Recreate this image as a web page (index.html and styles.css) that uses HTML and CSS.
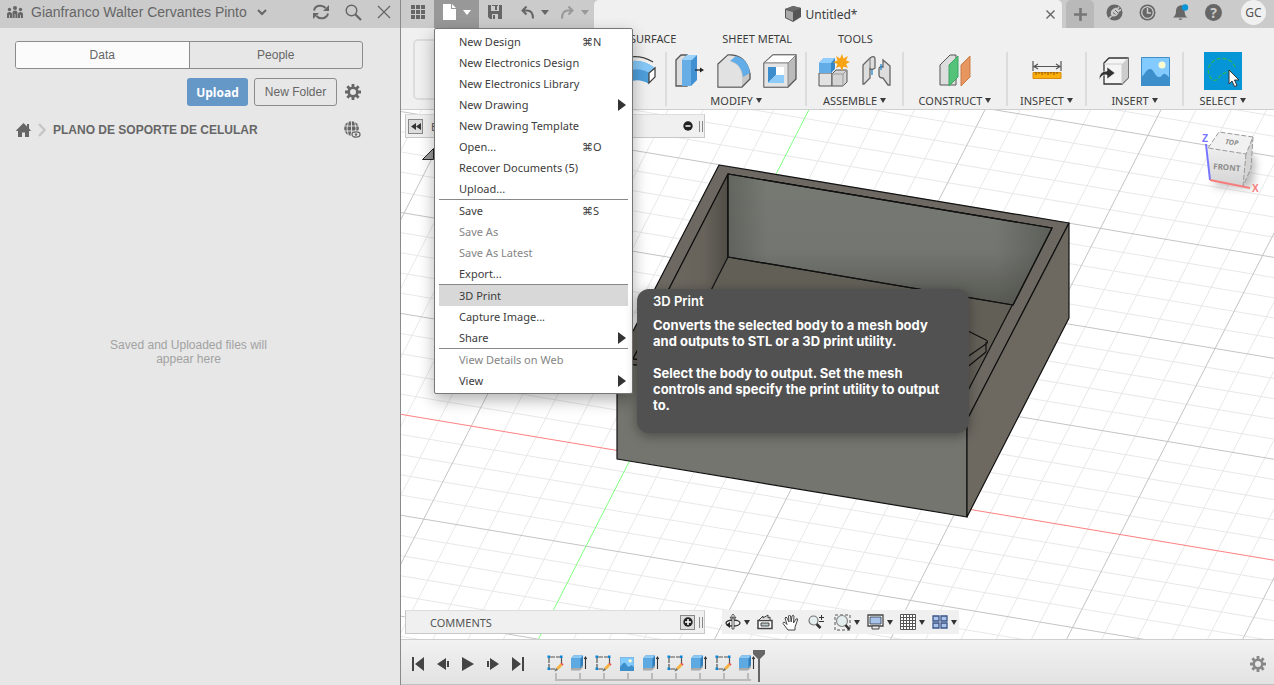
FILE: index.html
```html
<!DOCTYPE html>
<html lang="en">
<head>
    <meta charset="UTF-8">
    <meta name="viewport" content="width=device-width, initial-scale=1.0">
    <title>Untitled*</title>
    <link rel="stylesheet" href="styles.css">
</head>
<body>

    <!-- Shared icons -->
    <svg class="defs" width="0" height="0">
        <symbol id="i-gear" viewBox="0 0 16 16">
            <g fill="currentColor">
                <path fill-rule="evenodd" d="M8 2.400a5.600 5.600 0 1 0 0 11.200A5.600 5.600 0 0 0 8 2.400zM8 5a3 3 0 1 1 0 6 3 3 0 0 1 0-6z"/>
                <path d="M6.600 0h2.800v3H6.600zM6.600 13h2.800v3H6.600zM0 6.600h3v2.800H0zM13 6.600h3v2.800h-3z"/>
                <path transform="rotate(45 8 8)" d="M6.600 0h2.800v3H6.600zM6.600 13h2.800v3H6.600zM0 6.600h3v2.800H0zM13 6.600h3v2.800h-3z"/>
            </g>
        </symbol>
        <symbol id="i-sketch" viewBox="0 0 17 17">
            <path d="M3 2h10M2 3v10M14.500 3v6M3 14h5" fill="none" stroke="#555" stroke-width="1.200" stroke-dasharray="5 1"/>
            <path d="M0.500 0.500h2.500v2.500H0.500zM13 0.500h2.500v2.500H13zM0.500 12.500h2.500v2.500H0.500z" fill="#0e85d8"/>
            <path d="M9 13l4.500-4.500 2 2L11 15z" fill="#f5b13d"/>
            <path d="M13.500 8.500l1-1 2 2-1 1z" fill="#e8414b"/>
            <path d="M9 13l-1.500 3.500L11 15z" fill="#666"/>
        </symbol>
        <symbol id="i-extrude" viewBox="0 0 17 17">
            <path d="M0 13v2.500h9l3-3V9z" fill="#aaa"/>
            <path d="M0 3.500l2.500-3H12v9.500l-2.500 3H0z" fill="#2e7dbb"/>
            <path d="M0 3.500l2.500-3H12l-2.500 3z" fill="#8cc9f5"/>
            <path d="M0 3.500h9.500V13H0z" fill="#5ea9e2"/>
            <path d="M14.500 2v12M13.300 4l1.200-2 1.200 2" fill="none" stroke="#333" stroke-width="1.100"/>
        </symbol>
        <symbol id="i-image" viewBox="0 0 29 29">
            <path d="M0.500 0.500h28v28H0.500z" fill="#83caff" stroke="#3f8fcb"/>
            <path d="M0 20c4-2 5-8 9-8s5 8 9 8 3-4 6-3 3 3 5 4v8H0z" fill="#3c8fcb"/>
            <circle cx="21" cy="8" r="3.500" fill="#fdfbd0"/>
        </symbol>
    </svg>

    <div class="app">

        <!-- Data panel -->
        <aside class="data-panel">
            <header class="data-header">
                <svg class="team" width="16" height="13" viewBox="0 0 16 13"><g fill="#666"><circle cx="2.500" cy="3.500" r="1.700"/><circle cx="8" cy="2" r="2"/><circle cx="13.500" cy="3.500" r="1.700"/><path d="M0 12V8q0-2 2.500-2T5 8v4zM5.500 12V7q0-2.500 2.500-2.500T10.500 7v5zM11 12V8q0-2 2.500-2T16 8v4z"/></g><path d="M2.500 9v3M8 8v4M13.500 9v3" stroke="#cbcbcb" stroke-width=".8"/></svg>
                <span class="team-name">Gianfranco Walter Cervantes Pinto</span>
                <svg class="team-arrow" width="10" height="7" viewBox="0 0 10 7"><path d="M1 1l4 4 4-4" fill="none" stroke="#666" stroke-width="2"/></svg>
                <button class="icon-btn" aria-label="Refresh"><svg width="18" height="16" viewBox="0 0 18 16"><path d="M2 6.500a6.500 6 0 0 1 11.500-2.500M16 9.500A6.500 6 0 0 1 4.500 12" fill="none" stroke="#666" stroke-width="2"/><path d="M17 1v6h-6zM1 15V9h6z" fill="#666"/></svg></button>
                <button class="icon-btn" aria-label="Search"><svg width="17" height="17" viewBox="0 0 17 17"><circle cx="6.500" cy="6.500" r="5.300" fill="none" stroke="#666" stroke-width="1.400"/><path d="M10.500 10.500l5.500 5.500" stroke="#666" stroke-width="2.200"/></svg></button>
                <button class="icon-btn" aria-label="Close panel"><svg width="14" height="14" viewBox="0 0 14 14"><path d="M1 1l12 12M13 1L1 13" stroke="#666" stroke-width="1.200"/></svg></button>
            </header>
            <div class="data-tabs">
                <button class="active">Data</button>
                <button>People</button>
            </div>
            <div class="data-actions">
                <button class="upload">Upload</button>
                <button class="new-folder">New Folder</button>
                <button class="icon-btn" aria-label="Settings"><svg width="16" height="16"><use href="#i-gear"/></svg></button>
            </div>
            <div class="breadcrumb">
                <svg width="15" height="14" viewBox="0 0 15 14"><path d="M0 7.500L7.500 0 11 3.500V1h2v4.500l2 2-1 .5h-1v6H9V9.500H6V14H2V8H0.500z" fill="#666"/></svg>
                <svg width="8" height="14" viewBox="0 0 8 14"><path d="M1 1l5.500 6L1 13" fill="none" stroke="#c6c6c6" stroke-width="2.500"/></svg>
                <strong>PLANO DE SOPORTE DE CELULAR</strong>
                <button class="icon-btn globe" aria-label="Open on the web"><svg width="17" height="17" viewBox="0 0 17 17"><circle cx="7.500" cy="7.500" r="7.300" fill="#666"/><path d="M7.500 0v15M0 5h15M0 10h15M4.500 0q-3 7.500 0 15M10.500 0q3 7.500 0 15" fill="none" stroke="#e7e7e7" stroke-width=".9"/><ellipse cx="12" cy="13.500" rx="5.500" ry="3.800" fill="#e7e7e7"/><ellipse cx="12" cy="13.500" rx="4" ry="2.600" fill="none" stroke="#666" stroke-width="1.300"/><circle cx="12" cy="13.500" r="1.200" fill="#666"/></svg></button>
            </div>
            <p class="empty">Saved and Uploaded files will<br>appear here</p>
        </aside>

        <main class="workspace">

            <!-- Top bar -->
            <header class="topbar">
                <button class="tool-btn grid-btn" aria-label="Show data panel"><svg width="14" height="14" viewBox="0 0 14 14"><path d="M0 0h4v4H0zM5 0h4v4H5zM10 0h4v4h-4zM0 5h4v4H0zM5 5h4v4H5zM10 5h4v4h-4zM0 10h4v4H0zM5 10h4v4H5zM10 10h4v4h-4z" fill="#666"/></svg></button>
                <div class="file">
                    <button class="tool-btn file-btn" aria-label="File">
                        <svg width="13" height="16" viewBox="0 0 13 16"><path d="M0 0h8v5h5v11H0zM9 0l4 4H9z" fill="#fff"/></svg>
                        <i class="caret"></i>
                    </button>
                    <ul class="menu">
                        <li><button>New Design<kbd>⌘N</kbd></button></li>
                        <li><button>New Electronics Design</button></li>
                        <li><button>New Electronics Library</button></li>
                        <li><button class="sub">New Drawing</button></li>
                        <li><button>New Drawing Template</button></li>
                        <li><button>Open...<kbd>⌘O</kbd></button></li>
                        <li><button>Recover Documents (5)</button></li>
                        <li><button>Upload...</button></li>
                        <li class="sep"><button>Save<kbd>⌘S</kbd></button></li>
                        <li><button disabled>Save As</button></li>
                        <li><button disabled>Save As Latest</button></li>
                        <li><button>Export...</button></li>
                        <li class="sep selected">
                            <button>3D Print</button>
                            <div class="tooltip" role="tooltip">
                                <h2>3D Print</h2>
                                <p>Converts the selected body to a mesh body and outputs to STL or a 3D print utility.</p>
                                <p>Select the body to output. Set the mesh controls and specify the print utility to output to.</p>
                            </div>
                        </li>
                        <li><button>Capture Image...</button></li>
                        <li><button class="sub">Share</button></li>
                        <li class="sep"><button disabled>View Details on Web</button></li>
                        <li><button class="sub">View</button></li>
                    </ul>
                </div>
                <div class="quick">
                    <button class="tool-btn" aria-label="Save"><svg width="14" height="14" viewBox="0 0 14 14"><path d="M0 0h14v14H2l-2-2z" fill="#666"/><path d="M3 0h8v6H3zM4 9h6v5H4z" fill="#cbcbcb"/><path d="M7 1h2v4H7zM5 10h2v4H5zM4 0h6v1H4z" fill="#666"/></svg></button>
                    <button class="tool-btn undo" aria-label="Undo"><svg width="13" height="13" viewBox="0 0 13 13"><path d="M1.500 4.500H6q6 0 6 8M5.500 0.500l-4 4 4 4" fill="none" stroke="#666" stroke-width="2"/></svg><i class="caret"></i></button>
                    <button class="tool-btn redo" aria-label="Redo" disabled><svg width="13" height="13" viewBox="0 0 13 13"><path d="M11.500 4.500H7q-6 0-6 8M7.500 0.500l4 4-4 4" fill="none" stroke="#999" stroke-width="2"/></svg><i class="caret"></i></button>
                </div>
                <div class="doc-tab">
                    <svg width="16" height="16" viewBox="0 0 16 16"><path d="M0 3l8-3 8 2v9l-8 5-8-4z" fill="#555"/><path d="M1 4l7 2v9l-7-3.500z" fill="#aaa"/><path d="M0 3l8-3 8 2-8 3.500z" fill="#6a6a6a"/></svg>
                    <span>Untitled*</span>
                    <button class="icon-btn" aria-label="Close tab"><svg width="9" height="9" viewBox="0 0 9 9"><path d="M0.500 0.500l8 8M8.500 0.500l-8 8" stroke="#666" stroke-width="1.400"/></svg></button>
                </div>
                <button class="new-tab" aria-label="New tab"><svg width="13" height="13" viewBox="0 0 13 13"><path d="M6.500 0v13M0 6.500h13" stroke="#777" stroke-width="2.600"/></svg></button>
                <div class="account">
                    <button class="icon-btn" aria-label="Extensions"><svg width="17" height="17" viewBox="0 0 17 17"><circle cx="8.500" cy="8.500" r="8" fill="#666"/><path d="M10 3.500L7 5Q4 7 5 11l1.500 1.500Q11 13 12.500 9l1-2.500z" fill="#cbcbcb"/><path d="M5.500 12L3 14.500M11.500 5l1.500-2M13 7l2-1.500" stroke="#cbcbcb" stroke-width="1.600"/><path d="M7 8.500l2.500 2M9 6l3 3" stroke="#666"/></svg></button>
                    <button class="icon-btn" aria-label="Job status"><svg width="17" height="17" viewBox="0 0 17 17"><circle cx="8.500" cy="8.500" r="8" fill="#666"/><circle cx="8.500" cy="8.500" r="5.800" fill="none" stroke="#cbcbcb" stroke-width="1.300"/><path d="M8.500 4v5H12" fill="none" stroke="#cbcbcb" stroke-width="1.500"/></svg></button>
                    <button class="icon-btn" aria-label="Notifications"><svg width="17" height="17" viewBox="0 0 17 17"><path d="M1 13.500q3-2 3-6.500t4-5.500 4.500 5.500 3.500 6.500zM6.500 14.500h4q-2 3-4 0z" fill="#666"/><circle cx="13" cy="3.500" r="3.200" fill="#0696d7"/></svg></button>
                    <button class="icon-btn help" aria-label="Help">?</button>
                    <button class="avatar">GC</button>
                </div>
            </header>

            <!-- Ribbon -->
            <section class="ribbon">
                <button class="design" aria-label="Workspace"></button>
                <div class="ribbon-main">
                    <nav class="ribbon-tabs">
                        <a href="#">SURFACE</a>
                        <a href="#">SHEET METAL</a>
                        <a href="#">TOOLS</a>
                    </nav>
                    <div class="groups">
                        <div class="group create">
                            <div class="icons">
                                <svg width="36" height="32" viewBox="0 0 36 32"><path d="M2 4Q18-2 33 7" fill="none" stroke="#444" stroke-width="1.300"/><path d="M2 9Q18 1 35 13l-6 5v11Q18 22 6 28z" fill="#4e9fdc"/><path d="M2 9Q18 1 35 13l-6 5Q18 11 4 17z" fill="#85c8f7"/><path d="M29 18l6-5v9l-6 6z" fill="#fff" stroke="#444" stroke-width="1.300"/></svg>
                            </div>
                        </div>
                        <div class="group">
                            <div class="icons">
                                <svg width="30" height="34" viewBox="0 0 30 34"><path d="M1 6l5-5h6v31H1z" fill="#ddd" stroke="#555" stroke-width="1.300"/><path d="M7 6l5-5h10v25l-6 6H7z" fill="#4191d2"/><path d="M7 6l5-5h10l-5 5z" fill="#9bd3fb"/><path d="M7 6h9v26H7z" fill="#68aee6"/><path d="M20 16h7" stroke="#222" stroke-width="1.300"/><path d="M25 13.500l4 2.500-4 2.500z" fill="#222"/></svg>
                                <svg width="34" height="34" viewBox="0 0 34 34"><path d="M1 10L11 1q18-1 22 19v5l-8 8H1z" fill="#c8c8c8" stroke="#555" stroke-width="1.300"/><path d="M1.600 10.500L11 1.600l7 1-4 5.400Q25 11 25 24v8.400H1.600z" fill="#e2e2e2"/><path d="M13 7l6-5q12 3 14 17l-7 4Q24 9 13 7z" fill="#62ade8"/></svg>
                                <svg width="34" height="34" viewBox="0 0 34 34"><path d="M1 9l9-8h23v24l-8 8H1z" fill="#bbb" stroke="#555" stroke-width="1.300"/><path d="M1 9l9-8h23l-8 8z" fill="#fff" stroke="#777" stroke-width=".8"/><path d="M1 9h24v24H1z" fill="#e4e4e4" stroke="#777" stroke-width=".8"/><path d="M5 13h16v16H5z" fill="#fff"/><path d="M5 13h8v8l-8 8z" fill="#3b8ecb"/><path d="M5 29l8-8h8v8z" fill="#8ccbfa"/></svg>
                            </div>
                            <button class="label">MODIFY <i class="caret"></i></button>
                        </div>
                        <div class="group">
                            <div class="icons">
                                <svg width="32" height="34" viewBox="0 0 32 34"><path d="M1 19h13v13H1z" fill="#e2e2e2" stroke="#555"/><path d="M14 20l4-4h11v12l-4 4H14z" fill="#d4d4d4" stroke="#555"/><path d="M14 20h11v12M25 20l4-4" fill="none" stroke="#999"/><path d="M1 9l5-5h11v11l-4 4H1z" fill="#3687c8"/><path d="M1 9l5-5h11l-4 5z" fill="#91ceff"/><path d="M1 9h12v10H1z" fill="#62ade7"/><path d="M24 0l1.500 4.500L30 2l-2 4.500 4 1.500-4 2 2 4-4.500-1.500L24 17l-2-4.500L18 14l1.500-4-4.500-2 4.500-1.500L18 2l4 2.500z" fill="#f7a313"/></svg>
                                <svg width="30" height="32" viewBox="0 0 30 32"><path d="M1 10l7-7q5-3 5 1v9q-4 3-5 0v10l-6 6H1zM17 14q0-3 4-2V5l7 6v19h-2l-5-7q-4 0-4-3z" fill="#ddd" stroke="#666" stroke-width="1.300"/><path d="M8 3v12" stroke="#777"/><path d="M10 15v5M19 9v6" stroke="#2489d1" stroke-width="1.300"/></svg>
                            </div>
                            <button class="label">ASSEMBLE <i class="caret"></i></button>
                        </div>
                        <div class="group">
                            <div class="icons">
                                <svg width="32" height="34" viewBox="0 0 32 34"><path d="M1 11L11 1h6v30H1z" fill="#ddd" stroke="#555"/><path d="M10 11l9-9v21l-9 9z" fill="#55c27a" stroke="#3da665"/><path d="M22 11l9-9v21l-9 9z" fill="#e8965f" stroke="#c97d48"/></svg>
                            </div>
                            <button class="label">CONSTRUCT <i class="caret"></i></button>
                        </div>
                        <div class="group">
                            <div class="icons">
                                <svg width="30" height="20" viewBox="0 0 30 20"><path d="M1 0v10M29 0v10M3 5.500h24M6 3L2 5.500 6 8M24 3l4 2.500L24 8" fill="none" stroke="#555" stroke-width="1.200"/><path d="M1 11.500h28v6H1z" fill="#fdaf0d" stroke="#d98c0c"/><path d="M4 11v3M7 11v2M10 11v3M13 11v2M16 11v3M19 11v2M22 11v3M25 11v2" stroke="#865307"/></svg>
                            </div>
                            <button class="label">INSPECT <i class="caret"></i></button>
                        </div>
                        <div class="group">
                            <div class="icons">
                                <svg width="30" height="30" viewBox="0 0 30 30"><path d="M5 7l5-5h19v20l-6 6H5z" fill="#f5f5f5" stroke="#333" stroke-width="1.300"/><path d="M23 8l6-6v20l-6 6z" fill="#ccc"/><path d="M5 8h18v20" fill="none" stroke="#ccc"/><path d="M0 24q0-9 8-9v-4l8 6-8 6v-4q-5-1-8 5z" fill="#333" stroke="#f5f5f5" stroke-width=".6"/></svg>
                                <svg width="29" height="29"><use href="#i-image"/></svg>
                            </div>
                            <button class="label">INSERT <i class="caret"></i></button>
                        </div>
                        <div class="group">
                            <div class="icons">
                                <svg width="38" height="38" viewBox="0 0 38 38"><path d="M0 0h38v38H0z" fill="#0696d7"/><path d="M31 15A13 12 0 1 0 5 23Q9 31 14 27q3-6 13-8" fill="none" stroke="#2db35a" stroke-width="1.300" stroke-dasharray="4 2"/><path d="M25 18v14l3-3 2.500 5.500 2.500-1-2.500-5.500h4.500z" fill="#fff" stroke="#333"/></svg>
                            </div>
                            <button class="label">SELECT <i class="caret"></i></button>
                        </div>
                    </div>
                </div>
            </section>

            <!-- Viewport -->
            <section class="viewport">
                <svg class="scene" viewBox="401 110 873 529" preserveAspectRatio="xMinYMin slice">
                    <defs>
                        <linearGradient id="wall" x1="0" y1="0" x2="0" y2="1"><stop offset="0" stop-color="#777973"/><stop offset=".6" stop-color="#737570"/><stop offset="1" stop-color="#575852"/></linearGradient>
                        <linearGradient id="wallShade"><stop offset="0" stop-color="#444640" stop-opacity=".4"/><stop offset=".12" stop-color="#444640" stop-opacity="0"/><stop offset=".83" stop-color="#444640" stop-opacity="0"/><stop offset="1" stop-color="#444640" stop-opacity=".5"/></linearGradient>
                        <linearGradient id="side"><stop offset="0" stop-color="#706b63"/><stop offset=".75" stop-color="#67635b"/><stop offset="1" stop-color="#504d46"/></linearGradient>
                        <linearGradient id="cubeFace" x1="0" y1="0" x2="0" y2="1"><stop offset="0" stop-color="#eee"/><stop offset="1" stop-color="#d4d4d4"/></linearGradient>
                        <filter id="soft" x="-50%" y="-50%" width="200%" height="200%"><feGaussianBlur stdDeviation="4"/></filter>
                    </defs>
                    <path class="grid-minor" id="grid-minor"/>
                    <path class="grid-major" id="grid-major"/>
                    <path class="axis-x" id="axis-x"/>
                    <path class="axis-y" id="axis-y"/>

                    <!-- Box -->
                    <g class="solid">
                        <path d="M719 165L1069 223 967 420 617 362z" fill="#6d6962"/>
                        <path d="M617 362L967 420V517L617 459z" fill="#74756e"/>
                        <path d="M1069 223V318L967 517V420z" fill="#6d6961"/>
                        <path d="M728 174L1052 228 957 412 633 359z" fill="#625f57"/>
                        <path d="M728 174V257L676 359H633z" fill="url(#side)"/>
                        <path d="M728 174L1052 228 1013 305 728 257z" fill="url(#wall)"/>
                        <path d="M728 174L1052 228 1013 305 728 257z" fill="url(#wallShade)"/>
                        <path d="M960 327L986 340Q989 342 986 344L960 362M986 352L960 373M986 342V352" fill="none"/>
                    </g>

                    <!-- View cube -->
                    <path d="M1212 186L1252 188 1256 160 1246 150z" fill="#777" opacity=".5" filter="url(#soft)"/>
                    <path d="M1208 148L1219 132 1253 137 1246 154z" fill="#f1f1f1"/>
                    <path d="M1208 148L1246 154 1243 186 1210 180z" fill="url(#cubeFace)"/>
                    <path d="M1246 154L1253 137 1251 168 1243 186z" fill="#d4d4d4"/>
                    <path d="M1208 148L1219 132 1253 137 1246 154zM1246 154L1243 186M1253 137L1251 168 1243 186" fill="none" stroke="#999" stroke-dasharray="5 2"/>
                    <path d="M1206 144L1210 180" stroke="#7775ff" stroke-width="2"/>
                    <path d="M1210 180L1250 188" stroke="#f77c7c" stroke-width="2"/>
                    <text class="cube-text" x="1213" y="169" transform="rotate(5 1213 169)">FRONT</text>
                    <text class="cube-text top" x="1225" y="144" transform="rotate(7 1225 144)">TOP</text>
                    <text class="axis-label z" x="1202" y="142">Z</text>
                    <text class="axis-label x" x="1252" y="192">X</text>
                </svg>

                <div class="side-panel">
                    <button class="box-btn" aria-label="Collapse"><svg width="12" height="7" viewBox="0 0 12 7"><path d="M6 0v7L1 3.500zM11 0v7L6 3.500z" fill="#333"/></svg></button>
                    <span>BROWSER</span>
                    <svg class="dot" width="10" height="10" viewBox="0 0 10 10"><circle cx="5" cy="5" r="4.700" fill="#222"/><path d="M2.500 5h5" stroke="#fff" stroke-width="1.500"/></svg>
                    <i class="grip"></i>
                </div>
                <svg class="tree-arrow" width="12" height="12" viewBox="0 0 12 12"><path d="M11.500 0.500v11H0.500z" fill="#999" stroke="#222"/></svg>

                <div class="bottom-bars">
                    <div class="side-panel comments">
                        <span>COMMENTS</span>
                        <button class="box-btn" aria-label="Add comment"><svg width="10" height="10" viewBox="0 0 10 10"><circle cx="5" cy="5" r="4.700" fill="#222"/><path d="M2 5h6M5 2v6" stroke="#fff" stroke-width="1.500"/></svg></button>
                        <i class="grip"></i>
                    </div>
                    <div class="navbar">
                        <button aria-label="Orbit"><svg width="16" height="16" viewBox="0 0 16 16"><ellipse cx="8" cy="9" rx="7" ry="3" fill="none" stroke="#333" stroke-width="1.300"/><path d="M7 3h2v12H7zM8 0l3 4H5z" fill="#fff" stroke="#333" stroke-width=".8"/><path d="M1 11l4-3v6z" fill="#222"/></svg><i class="caret"></i></button>
                        <button aria-label="Look at"><svg width="16" height="16" viewBox="0 0 16 16"><path d="M1 6.500h14v8H1z" fill="#fff" stroke="#444" stroke-width="1.500"/><path d="M4 9h8v3H4z" fill="#bcc" stroke="#444"/><path d="M2 6l4-4v2l5-3v3l2-1v3" fill="#ddd" stroke="#444"/></svg></button>
                        <button aria-label="Pan"><svg width="17" height="17" viewBox="0 0 17 17"><path d="M6 16L1 9.500q0-2 2-1l2 2L3 4q1-2 2 0l2 4-.5-6q1-2 2 0l.7 6L10 2q1.500-1.500 2 0l-.5 7L14 5q2-1 1.500 1L13 13v3z" fill="#fff" stroke="#444"/></svg></button>
                        <button aria-label="Zoom"><svg width="17" height="16" viewBox="0 0 17 16"><circle cx="5.500" cy="6.500" r="4.500" fill="#e4eded" stroke="#777" stroke-width="1.200"/><path d="M8.500 10l4 4" stroke="#333" stroke-width="2.600"/><path d="M11 3.500h5M13.500 1v5M11 7.500h5" stroke="#333"/></svg></button>
                        <button aria-label="Fit"><svg width="17" height="17" viewBox="0 0 17 17"><path d="M1 1h15v15H1z" fill="none" stroke="#555" stroke-dasharray="3 2"/><circle cx="8" cy="7" r="5.500" fill="#e4eded" stroke="#888" stroke-width="1.200"/><path d="M11.500 11l4 4.500" stroke="#333" stroke-width="2.600"/></svg><i class="caret"></i></button>
                        <button aria-label="Display settings"><svg width="17" height="16" viewBox="0 0 17 16"><path d="M1 1h15v11H1z" fill="#fff" stroke="#444" stroke-width="1.300"/><path d="M3 3h11v7H3z" fill="#a9c4ea" stroke="#456"/><path d="M5 12h7v3H5z" fill="#eee" stroke="#444"/></svg><i class="caret"></i></button>
                        <button aria-label="Grid and snaps"><svg width="16" height="16" viewBox="0 0 16 16"><path d="M0.500 0.500h15v15H0.500z" fill="#fff" stroke="#555"/><path d="M3.500 0v16M6.500 0v16M9.500 0v16M12.500 0v16M0 3.500h16M0 6.500h16M0 9.500h16M0 12.500h16" stroke="#555"/></svg><i class="caret"></i></button>
                        <button aria-label="Viewports"><svg width="16" height="14" viewBox="0 0 16 14"><path d="M1 1h6v5H1zM9 1h6v5H9zM1 8h6v5H1zM9 8h6v5H9z" fill="#a9c3ea" stroke="#3a5488" stroke-width="1.300"/></svg><i class="caret"></i></button>
                    </div>
                </div>
            </section>

            <!-- Timeline -->
            <footer class="timeline">
                <div class="playback">
                    <button aria-label="Go to start"><svg width="14" height="14" viewBox="0 0 14 14"><path d="M1 0h2v14H1zM13 0v14L4 7z" fill="#444"/></svg></button>
                    <button aria-label="Step back"><svg width="14" height="14" viewBox="0 0 14 14"><path d="M10 1v12L1 7zM11 4h2v6h-2z" fill="#444"/></svg></button>
                    <button aria-label="Play"><svg width="14" height="14" viewBox="0 0 14 14"><path d="M1 0v14l12-7z" fill="#444"/></svg></button>
                    <button aria-label="Step forward"><svg width="14" height="14" viewBox="0 0 14 14"><path d="M4 1v12l9-6zM1 4h2v6H1z" fill="#444"/></svg></button>
                    <button aria-label="Go to end"><svg width="14" height="14" viewBox="0 0 14 14"><path d="M11 0h2v14h-2zM1 0v14l9-7z" fill="#444"/></svg></button>
                </div>
                <ol class="features">
                    <li><svg width="17" height="17"><use href="#i-sketch"/></svg></li>
                    <li><svg width="17" height="17"><use href="#i-extrude"/></svg></li>
                    <li><svg width="17" height="17"><use href="#i-sketch"/></svg></li>
                    <li><svg width="14" height="14"><use href="#i-image"/></svg></li>
                    <li><svg width="17" height="17"><use href="#i-extrude"/></svg></li>
                    <li><svg width="17" height="17"><use href="#i-sketch"/></svg></li>
                    <li><svg width="17" height="17"><use href="#i-extrude"/></svg></li>
                    <li><svg width="17" height="17"><use href="#i-sketch"/></svg></li>
                    <li><svg width="17" height="17"><use href="#i-extrude"/></svg></li>
                </ol>
                <svg class="marker" width="12" height="32" viewBox="0 0 12 32"><path d="M0 0h12v4L7 9v23H5V9L0 4z" fill="#666"/></svg>
                <button class="icon-btn settings" aria-label="Timeline settings"><svg width="16" height="16"><use href="#i-gear"/></svg></button>
            </footer>
        </main>
    </div>

    <script src="script.js"></script>
</body>
</html>
```
FILE: styles.css
```css
:root {
    --bar: #cbcbcb;
    --panel: #f0f0f0;
    --icon: #666;
    --text: #3c3c3c;
    --ui: "Noto Sans", sans-serif;
}

* { box-sizing: border-box; }

body {
    margin: 0;
    font-family: var(--ui);
    font-size: 11px;
    color: var(--text);
    overflow: hidden;
}

button {
    font: inherit; color: inherit;
    background: none; border: none; padding: 0;
}
svg { display: block; flex: none; }
.defs { position: absolute; }

.app { display: flex; height: 100vh; }

.icon-btn { display: flex; align-items: center; justify-content: center; }

.caret {
    border: 4px solid transparent;
    border-top: 5px solid currentColor;
    border-bottom: 0;
}

/* --- Data panel --- */
.data-panel {
    width: 401px; flex: none;
    background: #e7e7e7;
    border-right: 1px solid #8a8a8a;
    font-family: "Liberation Sans", Arial, sans-serif;
    color: #666;
}
.data-header {
    display: flex; align-items: center;
    height: 28px; padding: 0 9px 4px 7px;
    background: var(--bar);
    font-size: 14px;
}
.team-name { margin: 0 10px 0 8px; }
.team-arrow { margin-right: auto; }
.data-header .icon-btn { margin-left: 15px; }
.data-tabs {
    display: flex;
    margin: 13px 37px 0 15px;
    border: 1px solid #8c8c8c; border-radius: 3px;
    overflow: hidden;
}
.data-tabs button { flex: 1; height: 26px; font-size: 12px; }
.data-tabs .active { background: #fbfbfb; border-right: 1px solid #8c8c8c; }
.data-actions {
    display: flex; justify-content: flex-end;
    margin: 9px 39px 0 0;
}
.upload, .new-folder { height: 28px; border-radius: 3px; font-size: 12px; }
.upload {
    width: 61px; margin-right: 6px;
    background: #6598c7; color: #fff;
    font-family: "Open Sans", sans-serif; font-weight: 700;
}
.new-folder { width: 83px; margin-right: 8px; border: 1px solid #8c8c8c; }
.breadcrumb {
    display: flex; align-items: center; gap: 7px;
    margin: 15px 39px 0 16px; height: 17px;
    font-size: 12px;
}
.breadcrumb .globe { margin-left: auto; }
.empty {
    margin: 200px 23px 0 0;
    text-align: center; font-size: 12px; line-height: 14px;
    color: #a2a2a2;
}

/* --- Top bar --- */
.workspace { flex: 1; min-width: 0; display: flex; flex-direction: column; }
.topbar { display: flex; height: 28px; background: var(--bar); flex: none; }
.tool-btn {
    display: flex; align-items: center; justify-content: center; gap: 7px;
    height: 28px; padding-bottom: 4px;
    color: var(--icon);
}
.grid-btn { width: 33px; }
.file { position: relative; }
.file-btn { width: 45px; background: #989898; color: #fff; }
.quick { display: flex; width: 115px; padding-left: 9px; gap: 19px; }
.quick .undo { margin-right: -7px; }
.redo { color: #999; }
.doc-tab {
    flex: 1;
    display: flex; align-items: center; justify-content: center; gap: 5px;
    padding: 0 7px;
    background: var(--panel);
    border-radius: 5px 5px 0 0;
    font-size: 12px;
}
.doc-tab svg:first-child { margin-left: auto; }
.doc-tab .icon-btn { margin-left: auto; }
.new-tab {
    width: 28px; margin-left: 4px;
    display: flex; align-items: center; justify-content: center;
    background: #b9b9b9; border-radius: 5px 5px 0 0;
}
.account { display: flex; align-items: center; gap: 16px; padding: 0 8px 4px 12px; }
.help {
    width: 17px; height: 17px; border-radius: 50%;
    background: var(--icon); color: var(--bar);
    font-size: 14px; font-weight: 700;
}
.avatar {
    width: 25px; height: 25px; margin-left: 3px; border-radius: 50%;
    background: var(--panel); color: #555;
    font-size: 12px;
}

/* --- File menu --- */
.menu {
    position: absolute; top: 28px; left: 0; z-index: 10;
    width: 199px; margin: 0; padding: 2px 4px;
    list-style: none;
    background: #fff;
    border: 1px solid #777; border-radius: 2px;
    box-shadow: 0 6px 16px rgba(0, 0, 0, 0.3);
}
.menu li { position: relative; }
.menu button {
    display: flex; align-items: center;
    width: 100%; height: 21px; padding-left: 20px;
    text-align: left;
}
.menu button:disabled { color: #858585; }
.menu kbd { width: 46px; margin-left: auto; font-family: var(--ui), "DejaVu Sans"; }
.menu .sep { border-top: 1px solid #888; }
.menu .selected { background: #d8d8d8; }
.menu .sub::after {
    content: "";
    margin: 0 2px 0 auto;
    border: 6px solid transparent;
    border-left: 8px solid #333; border-right: 0;
}

.tooltip {
    position: absolute; left: 198px; top: 4px;
    width: 332px; padding: 4px 16px 20px;
    border-radius: 12px;
    background: #515151; color: #fff;
    box-shadow: 0 3px 12px rgba(0, 0, 0, 0.35);
    font: 700 13px/16px Inter, sans-serif;
}
.tooltip h2 { margin: 0 0 8px; font-size: 13px; font-weight: 600; }
.tooltip p { margin: 0; }
.tooltip p + p { margin-top: 16px; }

/* --- Ribbon --- */
.ribbon {
    display: flex; height: 82px; flex: none;
    background: var(--panel);
    border-bottom: 1px solid #cfcfcf;
}
.design {
    width: 120px; height: 61px; margin: 11px 7px 0 12px;
    border: 2px solid #dcdcdc; border-radius: 5px;
}
.ribbon-main { flex: 1; }
.ribbon-tabs { display: flex; gap: 46px; padding: 3px 0 0 90px; }
.ribbon-tabs a { color: inherit; text-decoration: none; line-height: 16px; }
.groups {
    display: grid;
    grid-template-columns: 127px 140px 97px 104px 79px 97px 77px;
    margin-top: 5px;
}
.group {
    display: flex; flex-direction: column; align-items: center;
    height: 54px;
    border-right: 2px solid #dcdcdc;
}
.group:last-child { border-right: 0; }
.icons { display: flex; align-items: center; justify-content: center; gap: 12px; height: 38px; flex: none; }
.create { align-items: flex-end; padding-right: 9px; }
.label { display: flex; align-items: center; gap: 3px; height: 20px; flex: none; white-space: nowrap; }
.label .caret { border-width: 5px 3px 0; }

/* --- Viewport --- */
.viewport {
    position: relative; flex: 1; min-height: 0;
    display: flex; flex-direction: column; align-items: flex-start;
    padding: 4px 4px 5px;
    background: #fff;
}
.scene { position: absolute; inset: 0; width: 100%; height: 100%; }
.grid-minor, .grid-major, .axis-x, .axis-y { fill: none; stroke-width: 1; }
.grid-minor { stroke: #e8e8e8; }
.grid-major { stroke: #c4c4c4; }
.axis-x { stroke: #ff8080; }
.axis-y { stroke: #80ff80; }
.solid path { stroke: #111; stroke-width: 1.2; stroke-linejoin: round; }
.cube-text { font: 700 8px var(--ui); fill: #8b8b8b; }
.cube-text.top { font-size: 7px; font-style: italic; }
.axis-label { font: 700 10px "Liberation Sans", sans-serif; }
.axis-label.z { fill: #7775ff; }
.axis-label.x { fill: #f77c7c; }

.side-panel {
    position: relative;
    display: flex; align-items: center;
    width: 300px; height: 24px; padding: 0 1px 0 2px;
    background: var(--panel);
    border: 1px solid #c8c8c8; border-top-color: #ddd;
    color: #555;
}
.side-panel span { margin: 0 auto 0 8px; }
.side-panel.comments span { margin-left: 22px; }
.box-btn {
    display: flex; align-items: center; justify-content: center;
    width: 15px; height: 15px;
    background: #ddd; border: 1px solid #888;
}
.grip {
    width: 4px; height: 11px; margin-left: 4px;
    border: 1px solid #888; border-width: 0 1px;
}
.side-panel .dot + .grip { margin-left: 6px; }
.tree-arrow { position: relative; margin: 10px 0 0 17px; }

.bottom-bars { position: relative; display: flex; gap: 17px; margin-top: auto; }
.navbar {
    display: flex; align-items: center; gap: 9px;
    height: 24px; padding: 0 4px 0 3px;
    background: var(--panel);
}
.navbar button { display: flex; align-items: center; gap: 3px; color: #333; }
.navbar .caret { margin-right: -2px; border-width: 5px 3px 0; }

/* --- Timeline --- */
.timeline {
    display: flex; align-items: flex-start; flex: none;
    height: 46px; padding-left: 10px;
    background: linear-gradient(#f2f2f2, #e2e2e2);
    border-top: 1px solid #cfcfcf; border-bottom: 1px solid #c0c0c0;
}
.playback { display: flex; gap: 11px; margin-top: 17px; }
.features {
    display: flex; list-style: none;
    margin: 14px 0 0 18px; padding: 0;
}
.features li {
    position: relative;
    display: flex; align-items: center; justify-content: center;
    width: 24px; height: 27px; padding-bottom: 8px;
}
/* Bracket under the operations */
.features li::after {
    content: "";
    position: absolute; left: 12px; bottom: 0;
    width: 100%; height: 6px;
    border-left: 2px solid #bbb; border-bottom: 2px solid #bbb;
}
.features li:last-child::after { width: 2px; }
.marker { margin: 10px 0 0 -6px; position: relative; }
.settings { margin: 16px 8px 0 auto; color: #888; }
```
FILE: script.js
```js
// Ground grid: origin and the two major step vectors
const origin = [633.5, 453.2];
const u = [162.2, 27.1];
const v = [-47.5, 93];
const reach = 8;

function point(a, b) {
    return (origin[0] + a * u[0] + b * v[0]).toFixed(1) + ' ' + (origin[1] + a * u[1] + b * v[1]).toFixed(1);
}

function alongU(b) {
    return 'M' + point(-reach, b) + 'L' + point(reach, b);
}

function alongV(a) {
    return 'M' + point(a, -reach) + 'L' + point(a, reach);
}

let minor = '';
let major = '';
for (let i = -reach * 5; i <= reach * 5; i++) {
    if (i === 0) continue;
    const line = alongU(i / 5) + alongV(i / 5);
    if (i % 5 === 0) {
        major += line;
    } else {
        minor += line;
    }
}

document.getElementById('grid-minor').setAttribute('d', minor);
document.getElementById('grid-major').setAttribute('d', major);
document.getElementById('axis-x').setAttribute('d', alongU(0));
document.getElementById('axis-y').setAttribute('d', alongV(0));
```
